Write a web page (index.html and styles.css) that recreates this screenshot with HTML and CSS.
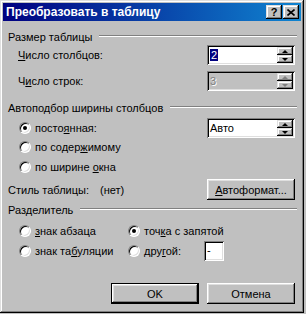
FILE: index.html
```html
<!DOCTYPE html>
<html lang="ru">
<head>
  <meta charset="UTF-8">
  <meta name="viewport" content="width=device-width, initial-scale=1.0">
  <title>Преобразовать в таблицу</title>
  <link rel="stylesheet" href="styles.css">
</head>
<body>
  <div class="window">
    <div class="titlebar">
      <span class="title">Преобразовать в таблицу</span>
      <div class="title-buttons">
        <span class="tbtn">?</span>
        <span class="tbtn tbtn-close">
          <svg width="8" height="7" viewBox="0 0 8 7"><path d="M0.5 0.5L7.5 6.5M7.5 0.5L0.5 6.5" stroke="#000" stroke-width="1.6"/></svg>
        </span>
      </div>
    </div>

    <div class="content">
      <div class="group-head size-head"><span>Размер таблицы</span><i class="etch"></i></div>
      <div class="row cols-row">
        <span><u>Ч</u>исло столбцов:</span>
        <div class="spin">
          <div class="value"><span class="selected">2</span></div>
          <div class="spin-btns"><span class="sb up"></span><span class="sb down"></span></div>
        </div>
      </div>
      <div class="row rows-row">
        <span>Ч<u>и</u>сло строк:</span>
        <div class="spin disabled">
          <div class="value">3</div>
          <div class="spin-btns"><span class="sb up"></span><span class="sb down"></span></div>
        </div>
      </div>

      <div class="group-head fit-head"><span>Автоподбор ширины столбцов</span><i class="etch"></i></div>
      <div class="row fixed-row">
        <span class="radio checked"></span>
        <span>посто<u>я</u>нная:</span>
        <div class="spin">
          <div class="value">Авто</div>
          <div class="spin-btns"><span class="sb up"></span><span class="sb down"></span></div>
        </div>
      </div>
      <div class="row content-row">
        <span class="radio"></span>
        <span>по содер<u>ж</u>имому</span>
      </div>
      <div class="row window-row">
        <span class="radio"></span>
        <span>по ширине <u>о</u>кна</span>
      </div>

      <div class="style-row">
        <span class="style-label">Стиль таблицы:</span>
        <span>(нет)</span>
        <button class="btn autoformat"><u>А</u>втоформат...</button>
      </div>

      <div class="group-head sep-head"><span>Разделитель</span><i class="etch"></i></div>
      <div class="sep-grid sep-first">
        <div class="opt"><span class="radio"></span><span><u>з</u>нак абзаца</span></div>
        <div class="opt"><span class="radio checked"></span><span>точ<u>к</u>а с запятой</span></div>
      </div>
      <div class="sep-grid sep-second">
        <div class="opt"><span class="radio"></span><span>знак та<u>б</u>уляции</span></div>
        <div class="opt">
          <span class="radio"></span>
          <span class="other-label">дру<u>г</u>ой:</span>
          <div class="small-field">-</div>
        </div>
      </div>

      <div class="footer">
        <button class="btn default">OK</button>
        <button class="btn">Отмена</button>
      </div>
    </div>
  </div>
</body>
</html>
```

FILE: styles.css
```css
body {
  margin: 0;
  padding: 0;
  background: #c0c0c0;
}

.window {
  width: 304px;
  height: 313px;
  box-sizing: border-box;
  padding: 3px;
  background: #c0c0c0;
  box-shadow: inset -1px -1px #000, inset 1px 1px #dfdfdf, inset -2px -2px #808080, inset 2px 2px #fff;
  display: flex;
  flex-direction: column;
  font: 11px "Liberation Sans", Arial, sans-serif;
  color: #000;
}

.titlebar {
  height: 18px;
  display: flex;
  align-items: center;
  padding: 0 2px 0 3px;
  background: linear-gradient(to right, #000080, #1084d0);
  color: #fff;
}

.title {
  font-weight: bold;
  font-size: 12px;
}

.title-buttons {
  margin-left: auto;
  display: flex;
  gap: 1px;
}

.tbtn {
  width: 16px;
  height: 14px;
  box-sizing: border-box;
  background: #c0c0c0;
  box-shadow: inset -1px -1px #000, inset 1px 1px #dfdfdf, inset -2px -2px #808080, inset 2px 2px #fff;
  display: flex;
  align-items: center;
  justify-content: center;
  color: #000;
  font-weight: bold;
  font-size: 11px;
  line-height: 14px;
}

.tbtn-close svg {
  display: block;
}

.content {
  flex: 1;
  display: flex;
  flex-direction: column;
  padding: 0 4px 0 5px;
}

.group-head {
  display: flex;
  align-items: center;
  height: 14px;
  gap: 7px;
}

.etch {
  flex: 1;
  height: 0;
  border-top: 1px solid #808080;
  border-bottom: 1px solid #fff;
  margin-bottom: 2px;
}

.size-head { margin-top: 9px; }
.fit-head { margin-top: 10px; }
.sep-head { margin-top: 3px; }

.row {
  display: flex;
  align-items: center;
  gap: 4px;
  padding: 0 2px 0 10px;
  height: 14px;
}

.cols-row { height: 20px; margin-top: 1px; }
.rows-row { height: 20px; margin-top: 6px; }
.fixed-row { height: 20px; margin-top: 3px; }
.content-row { margin-top: 2px; }
.window-row { margin-top: 6px; }

.radio {
  width: 12px;
  height: 12px;
  box-sizing: border-box;
  flex: none;
  border-radius: 50%;
  background: #fff;
  border: 1px solid;
  border-color: #808080 #fff #fff #808080;
  box-shadow: inset 1px 1px #000, inset -1px -1px #dfdfdf;
  display: grid;
  place-items: center;
}

.row .radio {
  margin-left: 1px;
}

.radio.checked::after {
  content: "";
  width: 4px;
  height: 4px;
  border-radius: 50%;
  background: #000;
}

.spin {
  margin-left: auto;
  width: 88px;
  height: 20px;
  box-sizing: border-box;
  padding: 2px;
  display: flex;
  background: #fff;
  box-shadow: inset 1px 1px #808080, inset -1px -1px #fff, inset 2px 2px #000, inset -2px -2px #dfdfdf;
}

.spin .value {
  flex: 1;
  line-height: 16px;
  padding-left: 1px;
}

.selected {
  background: #000080;
  color: #fff;
  padding: 0 1px;
}

.spin-btns {
  width: 16px;
  display: flex;
  flex-direction: column;
}

.sb {
  flex: 1;
  background: #c0c0c0;
  box-shadow: inset -1px -1px #000, inset 1px 1px #dfdfdf, inset -2px -2px #808080, inset 2px 2px #fff;
  display: flex;
  align-items: center;
  justify-content: center;
}

.sb::after {
  content: "";
  width: 0;
  height: 0;
  border-left: 3px solid transparent;
  border-right: 3px solid transparent;
}

.sb.up::after {
  border-bottom: 3px solid #000;
}

.sb.down::after {
  border-top: 3px solid #000;
}

.spin.disabled {
  background: #c0c0c0;
  color: #808080;
  text-shadow: 1px 1px #fff;
}

.spin.disabled .sb.up::after {
  border-bottom-color: #808080;
}

.spin.disabled .sb.down::after {
  border-top-color: #808080;
}

.style-row {
  display: flex;
  align-items: center;
  height: 21px;
  margin-top: 5px;
  padding-right: 2px;
}

.style-label {
  width: 92px;
}

.btn {
  width: 88px;
  height: 21px;
  box-sizing: border-box;
  padding: 0;
  border: none;
  background: #c0c0c0;
  box-shadow: inset -1px -1px #000, inset 1px 1px #fff, inset -2px -2px #808080, inset 2px 2px #dfdfdf;
  font: 11px "Liberation Sans", Arial, sans-serif;
  color: #000;
}

.btn.autoformat {
  margin-left: auto;
}

.btn.default {
  box-shadow: inset 0 0 0 1px #000, inset -2px -2px #000, inset 2px 2px #fff, inset -3px -3px #808080, inset 3px 3px #dfdfdf;
}

.sep-grid {
  display: grid;
  grid-template-columns: 109px 1fr;
  padding: 0 2px 0 11px;
}

.sep-first { height: 14px; margin-top: 7px; }
.sep-second { height: 20px; margin-top: 3px; }

.opt {
  display: flex;
  align-items: center;
  gap: 4px;
}

.other-label {
  width: 56px;
}

.small-field {
  width: 20px;
  height: 20px;
  box-sizing: border-box;
  padding-left: 3px;
  line-height: 18px;
  background: #fff;
  box-shadow: inset 1px 1px #808080, inset -1px -1px #fff, inset 2px 2px #000, inset -2px -2px #dfdfdf;
}

.footer {
  display: flex;
  justify-content: flex-end;
  gap: 8px;
  margin-top: 22px;
  padding-right: 2px;
}
```
